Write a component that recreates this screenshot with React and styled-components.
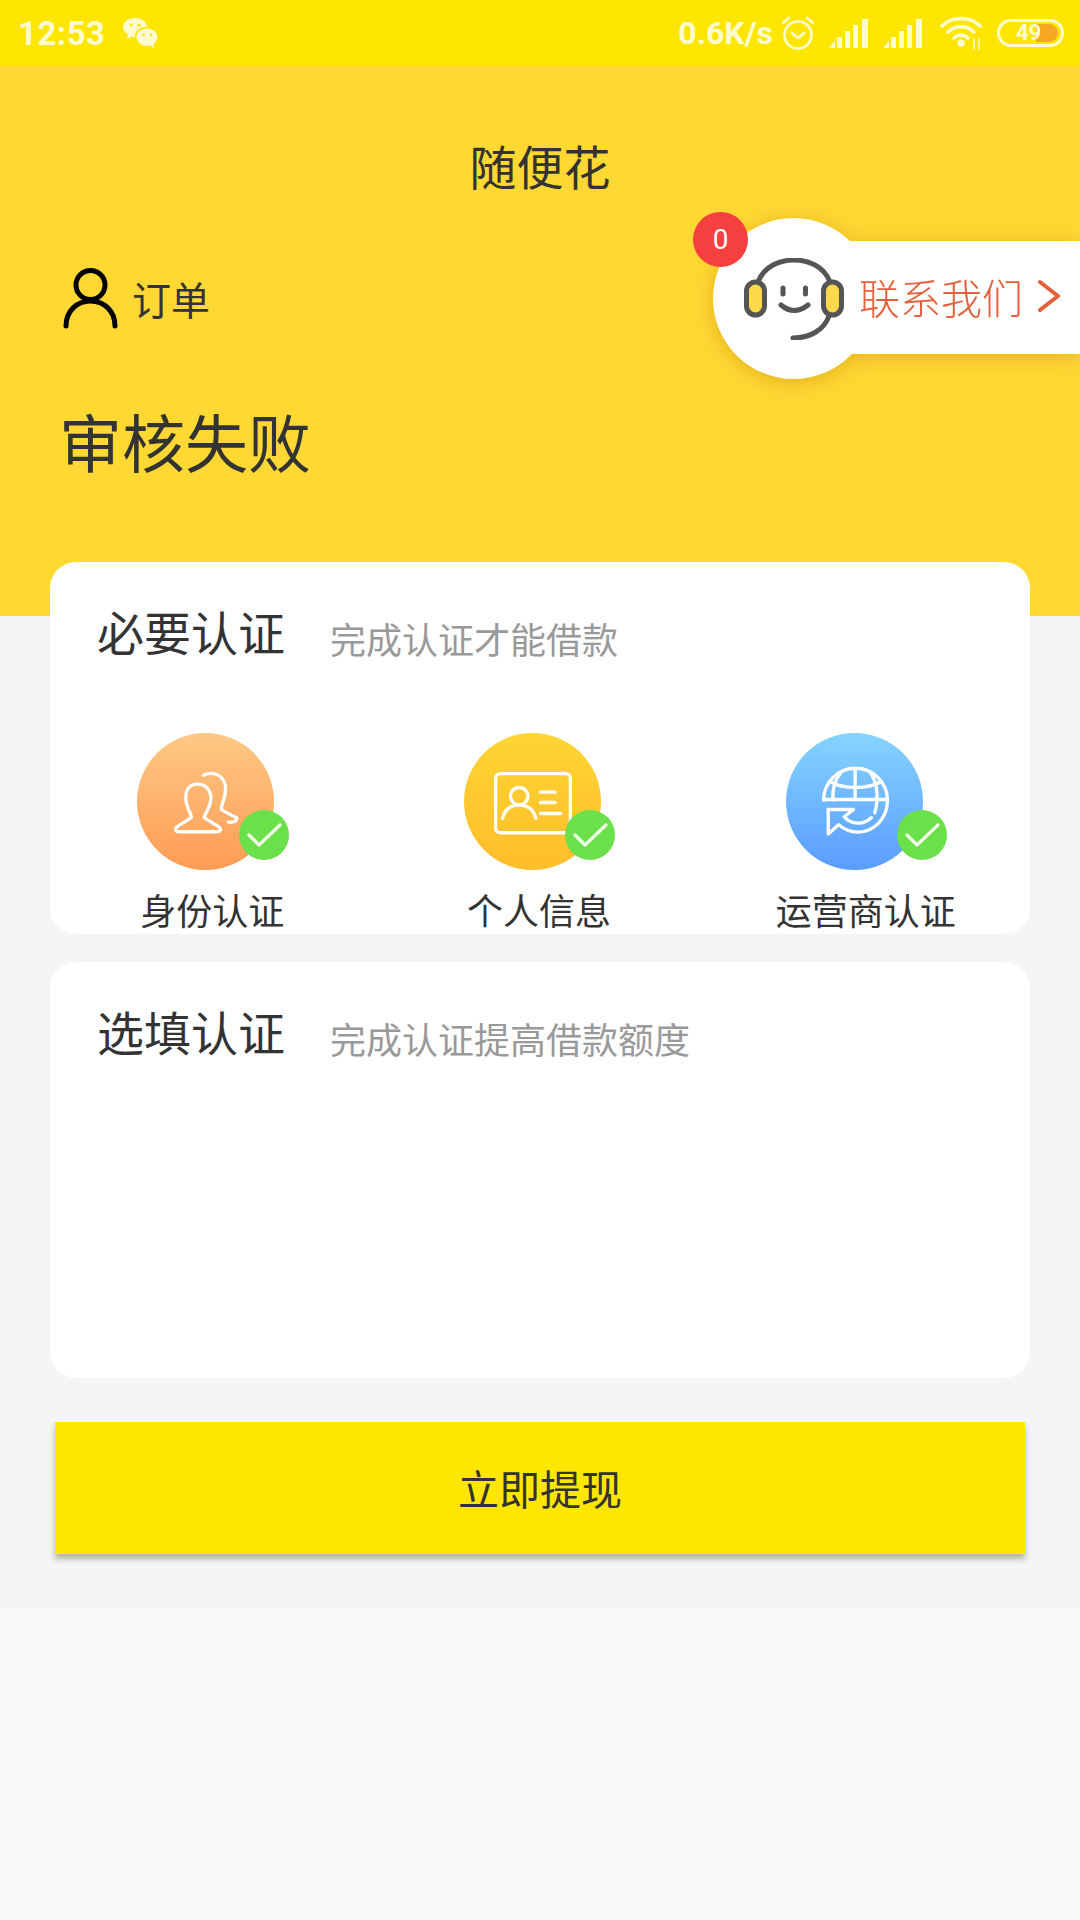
import React from 'react';
import styled, { createGlobalStyle } from 'styled-components';

const GlobalStyle = createGlobalStyle`
  html, body { margin: 0; padding: 0; background: #fafafa; }
  body { font-family: "Noto Sans CJK SC", "Noto Sans", sans-serif; }
  * { box-sizing: border-box; }
`;

const Page = styled.div`
  width: 1080px;
  height: 1920px;
  overflow: hidden;
  background: #fafafa;
`;

// STATUS BAR
const StatusBar = styled.div`
  height: 66px;
  background: #ffe600;
  display: flex;
  align-items: center;
  justify-content: space-between;
  padding: 0 16px 0 18px;
  color: #fffbd0;
  font-family: Roboto, sans-serif;
  font-weight: 700;
`;
const StatusGroup = styled.div`
  display: flex;
  align-items: center;
`;
const Clock = styled.span`
  font-size: 33px;
  letter-spacing: 0.5px;
  margin-right: 17px;
`;
const Speed = styled.span`
  font-size: 32px;
  margin-right: 8px;
`;
const StatusIcon = styled.svg`
  display: block;
  margin-right: ${p => p.$gap || 0}px;
  fill: none;
  stroke: #fffbd0;
`;
const Battery = styled.div`
  position: relative;
  width: 67px;
  height: 28px;
  border: 3px solid #fffbd0;
  border-radius: 14px;
  overflow: hidden;
  display: flex;
  align-items: center;
  justify-content: center;
  padding-right: 4px;
`;
const BatteryFill = styled.div`
  position: absolute;
  top: 2px;
  bottom: 2px;
  right: 3px;
  width: 22px;
  background: #f5a623;
  border-radius: 0 10px 10px 0;
`;
const BatteryText = styled.span`
  position: relative;
  font-size: 22px;
  line-height: 1;
`;

// HEADER
const Header = styled.header`
  position: relative;
  height: 550px;
  background: #ffd833;
  color: #333;
  padding: 0 0 0 60px;
`;
const Title = styled.h1`
  margin: 0 0 0 -60px;
  padding-top: 67px;
  text-align: center;
  font-size: 47px;
  line-height: 64px;
  font-weight: 400;
`;
const OrderRow = styled.div`
  display: flex;
  align-items: center;
  gap: 14px;
  margin: 71px 0 0 3px;
  font-size: 39px;
  line-height: 61px;
`;
const ResultText = styled.div`
  margin: 69px 0 0 -1px;
  font-size: 63px;
  line-height: 84px;
`;

// CONTACT BUBBLE
const Contact = styled.div`
  position: absolute;
  top: 146px;
  right: 0;
  width: 387px;
`;
const ContactShape = styled.div`
  display: flex;
  align-items: center;
  padding-left: 20px;
  filter: drop-shadow(0 3px 10px rgba(190, 130, 0, 0.45));
`;
const ContactCircle = styled.div`
  width: 161px;
  height: 161px;
  flex: none;
  margin-top: 6px;
  border-radius: 50%;
  background: #fff;
  display: flex;
  align-items: center;
  justify-content: center;
`;
const ContactBar = styled.div`
  position: relative;
  flex: 1;
  height: 113px;
  margin: 3px 0 0 -24px;
  background: #fff;
  display: flex;
  align-items: center;
  padding: 0 0 3px 9px;
  gap: 15px;
  color: #e2613c;
  font-size: 41px;
  font-weight: 300;
`;
const Unread = styled.div`
  position: absolute;
  top: 0;
  left: 0;
  z-index: 2;
  width: 55px;
  height: 55px;
  border-radius: 50%;
  background: #f63f3f;
  color: #fff;
  font-family: Roboto, sans-serif;
  font-size: 28px;
  display: flex;
  align-items: center;
  justify-content: center;
`;

// BODY
const Body = styled.main`
  display: flow-root;
  background: #f4f5f7;
  height: 992px;
  padding: 0 50px;
`;
const Stack = styled.div`
  display: flex;
  flex-direction: column;
  gap: 28px;
  margin-top: -54px;
  position: relative;
`;
const Card = styled.section`
  height: ${p => p.$height}px;
  background: #fff;
  border-radius: 26px;
  overflow: hidden;
`;
const CardHead = styled.div`
  display: flex;
  align-items: center;
  padding: 37px 0 0 47px;
  color: #333;
`;
const CardTitle = styled.h2`
  margin: 0 45px 0 0;
  font-size: 47px;
  line-height: 64px;
  font-weight: 400;
`;
const CardHint = styled.span`
  margin-top: 14px;
  font-size: 36px;
  line-height: 50px;
  color: #999;
`;
const Items = styled.div`
  display: grid;
  grid-template-columns: repeat(3, 1fr);
  margin-top: 70px;
`;
const Item = styled.div`
  display: flex;
  flex-direction: column;
  align-items: center;
`;
const IconWrap = styled.div`
  position: relative;
  height: 137px;
  padding-right: ${p => p.$pad}px;
`;
const Disc = styled.div`
  width: 137px;
  height: 137px;
  border-radius: 50%;
  background: linear-gradient(180deg, ${p => p.$from}, ${p => p.$to});
`;
const Check = styled.svg`
  position: absolute;
  right: 0;
  bottom: 10px;
  width: 50px;
  height: 50px;
`;
const Glyph = styled.svg`
  display: block;
  width: 137px;
  height: 137px;
  fill: none;
  stroke: #fff;
  stroke-width: 10;
  stroke-linecap: round;
  stroke-linejoin: round;
`;
const ItemLabel = styled.div`
  margin-top: 14px;
  padding-right: 2px;
  font-size: 36px;
  line-height: 50px;
  color: #333;
`;
const SubmitButton = styled.button`
  display: block;
  width: 970px;
  height: 132px;
  margin: 44px 0 0 5px;
  padding: 0 0 2px;
  border: none;
  background: #ffe600;
  color: #333;
  font-family: inherit;
  font-size: 41px;
  box-shadow: 0 5px 6px rgba(0, 0, 0, 0.28);
`;

const Signal = ({ gap }) => (
  <StatusIcon width="40" height="29" viewBox="0 0 40 29" $gap={gap} style={{ stroke: 'none', fill: '#fffbd0' }}>
    <path d="M0 29 L6 22 V29Z M8 18 H13 V29 H8Z M16 12 H21 V29 H16Z M24 6 H29 V29 H24Z M33 0 H39 V29 H33Z" />
  </StatusIcon>
);

const CheckBadge = () => (
  <Check viewBox="0 0 50 50">
    <circle cx="25" cy="25" r="25" fill="#6ae04a" />
    <path d="M10 25 L20 35 L41 15" fill="none" stroke="#eefbe4" strokeWidth="3.4" strokeLinecap="round" strokeLinejoin="round" />
  </Check>
);

const items = [
  {
    label: '身份认证', from: '#fdc985', to: '#ff9b54', pad: 15, view: '50 38 412 412',
    paths: [
      'M232 192 C205 192 195 212 197 238 C199 262 212 280 214 292 C195 306 180 312 168 322 C163 330 168 335 175 335 L292 335 C300 335 304 328 298 322 C285 312 268 304 252 292 C256 278 270 262 272 238 C274 212 258 192 232 192 Z',
      'M250 165 C268 155 305 155 316 195 C320 235 300 255 304 268 C318 278 335 285 350 293 C352 300 345 308 325 306',
    ],
  },
  {
    label: '个人信息', from: '#ffd533', to: '#ffbd2b', pad: 14, view: '42 38 412 412',
    paths: [
      'M151 160 H348 A14 14 0 0 1 362 174 V324 A14 14 0 0 1 348 338 H151 A14 14 0 0 1 137 324 V174 A14 14 0 0 1 151 160 Z',
      'M208 202 A26 26 0 1 1 207.9 202 Z',
      'M158 295 C165 262 190 255 208 255 C226 255 250 262 258 295',
      'M272 216 H316 M272 247 H316 M272 280 H333',
    ],
  },
  {
    label: '运营商认证', from: '#85d4ff', to: '#5a9cff', pad: 24, view: '47 38 412 412',
    paths: [
      'M160 240 A96 96 0 0 1 352 240 C352 280 330 318 290 332',
      'M255 146 V235 M214 154 C192 180 186 210 188 240 M298 154 C320 182 328 228 314 278 M178 184 C220 208 292 208 334 184 M160 238 H352',
      'M174 268 H250 L222 290 C244 314 280 316 304 292',
      'M174 268 V342 L205 314 C232 336 262 340 290 332',
    ],
  },
];

export default function App() {
  return (
    <Page>
      <GlobalStyle />
      <StatusBar>
        <StatusGroup>
          <Clock>12:53</Clock>
          <StatusIcon width="35" height="30" viewBox="0 0 35 30" style={{ stroke: 'none' }}>
            <path fill="#fffbd0" d="M12 0 C19 0 23.5 4 24 9 C17 8.5 11.5 13 12 19 C10.5 19 9.5 19 8.5 18.5 L4 21 L5 16.5 C2 14.5 0 12 0 9 C0 4 5.5 0 12 0 Z" />
            <path fill="#fffbd0" d="M24 10.5 C30 10.5 34.5 14.5 34.5 19 C34.5 22 32.5 24.5 30.5 26 L31.5 30 L27 27.5 C20 29 13.5 25 13.5 19 C13.5 14.5 18 10.5 24 10.5 Z" />
            <circle cx="8" cy="7" r="1.6" fill="#ffe600" /><circle cx="16" cy="7" r="1.6" fill="#ffe600" />
            <circle cx="20.5" cy="17" r="1.4" fill="#ffe600" /><circle cx="28" cy="17" r="1.4" fill="#ffe600" />
          </StatusIcon>
        </StatusGroup>
        <StatusGroup>
          <Speed>0.6K/s</Speed>
          <StatusIcon width="34" height="34" viewBox="0 0 34 34" $gap={14} strokeWidth="2.6" strokeLinecap="round" strokeLinejoin="round">
            <circle cx="17" cy="19" r="13.5" />
            <path d="M11 17 L17 22 L23 17 M2 7 L8 2 M32 7 L26 2" />
          </StatusIcon>
          <Signal gap={14} />
          <Signal gap={17} />
          <StatusIcon width="43" height="34" viewBox="0 0 43 34" $gap={14} strokeWidth="3.4" strokeLinecap="round">
            <path d="M2 10 C12 0 30 0 40 10 M8 16 C15 9 27 9 34 16 M14 22 C18 18 24 18 28 22" />
            <circle cx="21" cy="27" r="2" fill="#fffbd0" />
            <path strokeWidth="1.6" d="M34 23 V33 M39 23 V33" />
          </StatusIcon>
          <Battery>
            <BatteryFill />
            <BatteryText>49</BatteryText>
          </Battery>
        </StatusGroup>
      </StatusBar>

      <Header>
        <Title>随便花</Title>
        <OrderRow>
          <svg width="55" height="61" viewBox="0 0 55 61" fill="none" stroke="#000" strokeWidth="5" strokeLinecap="round">
            <circle cx="27.5" cy="17" r="14.5" />
            <path d="M3 58 C3 43 14 33 27.5 33 C41 33 52 43 52 58" />
          </svg>
          订单
        </OrderRow>
        <ResultText>审核失败</ResultText>

        <Contact>
          <ContactShape>
            <ContactCircle>
              <svg width="100" height="82" viewBox="0 0 100 82" fill="none" stroke="#555" strokeWidth="5" strokeLinecap="round">
                <path d="M14 24 C20 8 36 2 50 2 C64 2 80 8 86 24" />
                <rect x="2.5" y="24" width="18" height="33" rx="9" fill="#ffd94a" />
                <rect x="79.5" y="24" width="18" height="33" rx="9" fill="#ffd94a" />
                <path d="M39 30 V36 M61.5 30 V36 M37 47 Q50 58 64 47 M85 58 C80 72 66 80 49 80" />
              </svg>
            </ContactCircle>
            <ContactBar>
              联系我们
              <svg width="22" height="34" viewBox="0 0 22 34" fill="none" stroke="#e2613c" strokeWidth="4" strokeLinecap="round" strokeLinejoin="round">
                <path d="M2 3 L20 17 L2 31" />
              </svg>
            </ContactBar>
          </ContactShape>
          <Unread>0</Unread>
        </Contact>
      </Header>

      <Body>
        <Stack>
          <Card $height={372}>
            <CardHead>
              <CardTitle>必要认证</CardTitle>
              <CardHint>完成认证才能借款</CardHint>
            </CardHead>
            <Items>
              {items.map(item => (
                <Item key={item.label}>
                  <IconWrap $pad={item.pad}>
                    <Disc $from={item.from} $to={item.to}>
                      <Glyph viewBox={item.view}>
                        {item.paths.map(d => <path key={d} d={d} />)}
                      </Glyph>
                    </Disc>
                    <CheckBadge />
                  </IconWrap>
                  <ItemLabel>{item.label}</ItemLabel>
                </Item>
              ))}
            </Items>
          </Card>
          <Card $height={416}>
            <CardHead>
              <CardTitle>选填认证</CardTitle>
              <CardHint>完成认证提高借款额度</CardHint>
            </CardHead>
          </Card>
        </Stack>
        <SubmitButton>立即提现</SubmitButton>
      </Body>
    </Page>
  );
}
